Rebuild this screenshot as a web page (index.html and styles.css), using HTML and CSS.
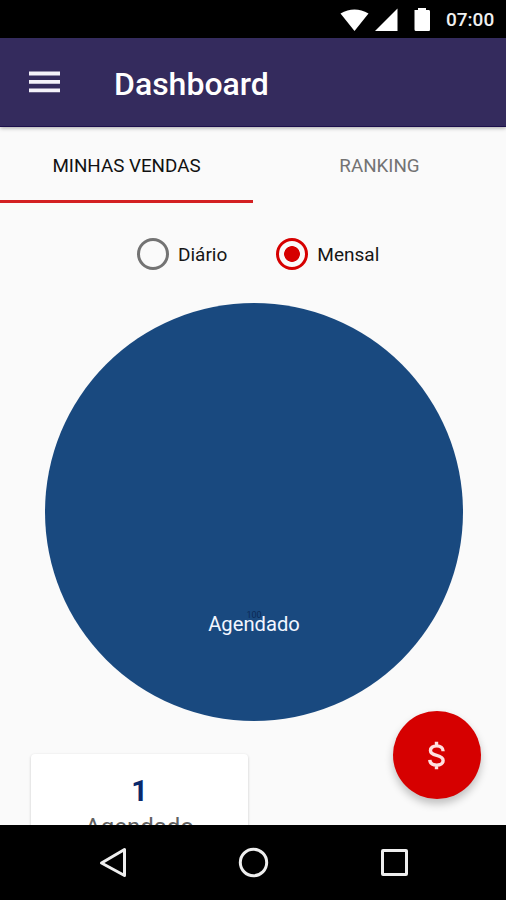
FILE: index.html
```html
<!DOCTYPE html>
<html lang="pt-BR">
<head>
<meta charset="utf-8">
<title>Dashboard</title>
<link rel="stylesheet" href="styles.css">
</head>
<body>
<div class="screen">
  <div class="status">
    <svg class="status-icons" width="92" height="26" viewBox="0 0 92 26" fill="#fff">
      <path d="M0.5 5.5Q14.5-2.7 28.5 5.5L14.5 23Z"/>
      <path d="M35 23L57.5 0.5V23Z"/>
      <path d="M74.5 2H78V0H86V2H89Q90 2 90 3.5V21.5Q90 23 89 23H76Q74.5 23 74.5 21.5Z"/>
    </svg>
    <span class="clock">07:00</span>
  </div>
  <header class="appbar">
    <svg class="menu" width="31" height="22" viewBox="0 0 31 22" fill="#f4f2fa"><path d="M0 0.6H31V4.4H0ZM0 9H31V12.8H0ZM0 17.4H31V21.2H0Z"/></svg>
    <h1 class="title">Dashboard</h1>
  </header>
  <nav class="tabs">
    <div class="tab active"><span>MINHAS VENDAS</span></div>
    <div class="tab"><span>RANKING</span></div>
  </nav>
  <main class="content">
    <div class="radios">
      <div class="option"><i class="radio"></i><span>Diário</span></div>
      <div class="option"><i class="radio checked"></i><span>Mensal</span></div>
    </div>
    <div class="pie">
      <span class="pie-value">100</span>
      <span class="pie-label">Agendado</span>
    </div>
    <section class="card">
      <strong class="count">1</strong>
      <span class="count-label">Agendado</span>
    </section>
  </main>
  <div class="fab">
    <svg width="17" height="29" viewBox="0 0 18 30" fill="none" stroke="#ffe0e0" stroke-width="3.6"><path d="M9 0.5V5M9 25V29.5M16 10.4C16 6.8 13.1 4.8 9.2 4.8C5.2 4.8 2.6 6.8 2.6 9.7C2.6 12.8 5.4 13.9 9.2 14.8C13.2 15.8 16 17.1 16 20.2C16 23.4 13.2 25.2 9.3 25.2C5 25.2 2.1 23.1 1.9 19.6"/></svg>
  </div>
  <footer class="navbar">
    <svg width="30" height="32" viewBox="0 0 30 32"><path d="M2.5 16L25.5 2.5V28.5Z"/></svg>
    <svg width="32" height="32" viewBox="0 0 32 32"><circle cx="15.5" cy="15.5" r="13.2"/></svg>
    <svg width="30" height="32" viewBox="0 0 30 32"><rect x="3.5" y="3.5" width="24" height="24" rx="0.5"/></svg>
  </footer>
</div>
</body>
</html>
```
FILE: styles.css
```css
* { box-sizing: border-box; }
body { margin: 0; font-family: Roboto, "Liberation Sans", sans-serif; background: #fafafa; }
.screen { position: relative; display: flex; flex-direction: column; width: 506px; height: 900px; overflow: hidden; }
.status { display: flex; flex: none; align-items: flex-start; height: 38px; padding: 8px 0 0 340px; background: #000; }
.clock { margin: 1px 0 0 14px; color: #f0f0f0; font-size: 19px; line-height: 22px; font-weight: 500; }
.appbar { z-index: 1; display: flex; flex: none; align-items: center; height: 89px; padding-left: 29px; background: #342b5d; border-bottom: 1px solid #1c0f4b; box-shadow: 0 1px 4px rgba(0,0,0,.35); }
.menu { display: block; }
.title { margin: 4px 0 0 54px; color: #fff; font-size: 32px; line-height: 36px; font-weight: 500; }
.tabs { display: flex; flex: none; height: 76px; }
.tab { display: flex; flex: 1; align-items: center; justify-content: center; padding-top: 5px; color: #737373; font-size: 18.8px; border-bottom: 3px solid transparent; }
.active { color: #111; border-color: #d32022; }
.content { display: flex; flex: 1; flex-direction: column; min-height: 0; overflow: hidden; }
.radios { display: flex; flex: none; gap: 49px; height: 100px; padding: 35px 0 0 137px; }
.option { display: flex; align-items: center; gap: 9px; height: 32px; color: #161616; font-size: 19px; }
.option span { padding-top: 1px; }
.radio { width: 32px; height: 32px; border: 3px solid #737373; border-radius: 50%; }
.checked { border-color: #d60000; background: radial-gradient(circle, #d60000 7.5px, transparent 8.2px); }
.pie { display: flex; flex: none; flex-direction: column; align-items: center; width: 418px; height: 418px; margin-left: 45px; padding-top: 308px; border-radius: 50%; background: #19497f; }
.pie-value { height: 0; color: #0c2a56; font-size: 9px; line-height: 9px; }
.pie-label { color: #f2f6ff; font-size: 20.2px; line-height: 26px; }
.card { display: flex; flex: none; flex-direction: column; align-items: center; width: 217px; height: 130px; margin: 33px 0 0 31px; padding-top: 19px; border-radius: 4px; background: #fff; box-shadow: 0 1px 3px rgba(0,0,0,.2); }
.count { color: #08296c; font-size: 29px; line-height: 36px; font-weight: 700; }
.count-label { margin-top: 3px; color: #606060; font-size: 24px; line-height: 30px; }
.fab { position: absolute; top: 711px; left: 393px; z-index: 1; display: flex; align-items: center; justify-content: center; width: 88px; height: 88px; padding-right: 2px; border-radius: 50%; background: #d60000; box-shadow: 0 5px 9px rgba(0,0,0,.24); }
.navbar { z-index: 2; display: flex; flex: none; align-items: flex-start; justify-content: space-between; height: 75px; padding: 22px 97px 0 99px; background: #000; fill: none; stroke: #eee; stroke-width: 3; stroke-linejoin: round; }
```
